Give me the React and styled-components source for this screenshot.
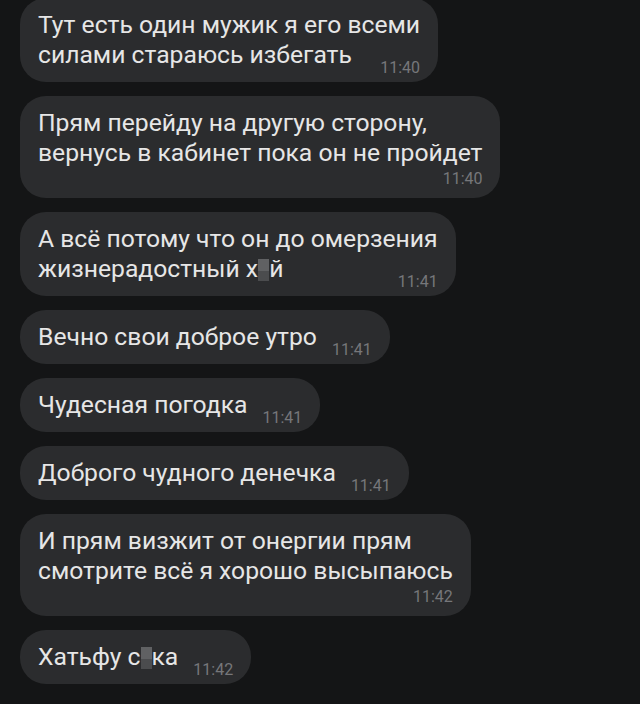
import React from "react";
import styled, { createGlobalStyle } from "styled-components";

const GlobalStyle = createGlobalStyle`
  html, body {
    margin: 0;
    padding: 0;
    background: #141516;
  }
  body {
    font-family: Roboto, "Noto Sans", "Liberation Sans", sans-serif;
  }
`;

const Censor = () => <Blur />;

const messages = [
  { lines: ["Тут есть один мужик я его всеми", "силами стараюсь избегать"], time: "11:40" },
  {
    lines: ["Прям перейду на другую сторону,", "вернусь в кабинет пока он не пройдет"],
    time: "11:40",
    below: true,
  },
  {
    lines: [
      "А всё потому что он до омерзения",
      <>
        жизнерадостный х<Censor />й
      </>,
    ],
    time: "11:41",
  },
  { lines: ["Вечно свои доброе утро"], time: "11:41" },
  { lines: ["Чудесная погодка"], time: "11:41" },
  { lines: ["Доброго чудного денечка"], time: "11:41" },
  {
    lines: ["И прям визжит от онергии прям", "смотрите всё я хорошо высыпаюсь"],
    time: "11:42",
    below: true,
  },
  {
    lines: [
      <>
        Хатьфу с<Censor />ка
      </>,
    ],
    time: "11:42",
  },
];

const Message = ({ lines, time, below }) => {
  const last = lines.length - 1;
  return (
    <Bubble>
      {lines.map((line, i) =>
        i === last && !below ? (
          <LastLine key={i}>
            <span>{line}</span>
            <Time>{time}</Time>
          </LastLine>
        ) : (
          <Line key={i}>{line}</Line>
        )
      )}
      {below && (
        <TimeRow>
          <Time $below>{time}</Time>
        </TimeRow>
      )}
    </Bubble>
  );
};

export default function App() {
  return (
    <>
      <GlobalStyle />
      <Chat>
        {messages.map((m, i) => (
          <Message key={i} {...m} />
        ))}
      </Chat>
    </>
  );
}

const Chat = styled.div`
  height: 704px;
  overflow: hidden;
  display: flex;
  flex-direction: column;
  align-items: flex-start;
  gap: 14px;
  padding: 0 20px;
  margin-top: -2px;
  box-sizing: border-box;
`;

const Bubble = styled.div`
  display: flex;
  flex-direction: column;
  background: #2b2c2e;
  border-radius: 26px;
  padding: 12px 18px 12px 18px;
  color: #e6e6e6;
  font-size: 24.7px;
  line-height: 30px;
`;

const Line = styled.div`
  white-space: nowrap;
`;

const LastLine = styled.div`
  display: flex;
  align-items: flex-end;
  justify-content: space-between;
  gap: 15px;
  white-space: nowrap;
`;

const TimeRow = styled.div`
  display: flex;
  justify-content: flex-end;
  height: 18px;
`;

const Time = styled.span`
  font-size: 16px;
  line-height: 18px;
  color: #76777a;
  margin-bottom: ${(p) => (p.$below ? "0" : "-7px")};
  margin-top: ${(p) => (p.$below ? "2px" : "0")};
`;

const Blur = styled.span`
  display: inline-block;
  width: 11px;
  height: 22px;
  vertical-align: -4px;
  background: linear-gradient(
    to bottom,
    #606163 0%,
    #606163 55%,
    #4b4c4e 55%,
    #4b4c4e 100%
  );
`;
